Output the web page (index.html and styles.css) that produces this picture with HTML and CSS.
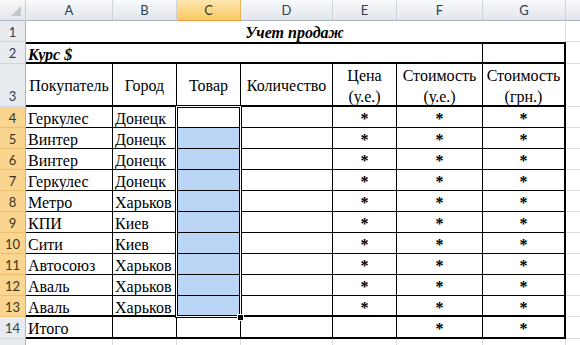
FILE: index.html
```html
<!DOCTYPE html>
<html>
<head>
<meta charset="utf-8">
<link rel="stylesheet" href="styles.css">
</head>
<body>
<div class="sheet">
  <div class="corner"><svg width="26" height="21" viewBox="0 0 26 21"><polygon points="21,6 21,16 11,16" fill="#c3c8cf"/></svg></div>
  <div class="ch">A</div><div class="ch">B</div><div class="ch csel">C</div><div class="ch">D</div><div class="ch">E</div><div class="ch">F</div><div class="ch">G</div><div class="ch last"></div>

  <div class="rh">1</div>
  <div class="c title">Учет продаж</div>
  <div class="h"></div>

  <div class="rh">2</div>
  <div class="c r2 kurs">Курс $</div>
  <div class="c r2 gl"></div>
  <div class="h"></div>

  <div class="rh rh3">3</div>
  <div class="c hd">Покупатель</div>
  <div class="c hd">Город</div>
  <div class="c hd">Товар</div>
  <div class="c hd">Количество</div>
  <div class="c hd">Цена<br>(у.е.)</div>
  <div class="c hd">Стоимость<br>(у.е.)</div>
  <div class="c hd gl">Стоимость<br>(грн.)</div>
  <div class="h"></div>

  <div class="rh rsel">4</div>
  <div class="c">Геркулес</div><div class="c">Донецк</div><div class="c"></div><div class="c"></div><div class="c s">*</div><div class="c s">*</div><div class="c s gl">*</div><div class="h"></div>

  <div class="rh rsel">5</div>
  <div class="c">Винтер</div><div class="c">Донецк</div><div class="c bl"></div><div class="c"></div><div class="c s">*</div><div class="c s">*</div><div class="c s gl">*</div><div class="h"></div>

  <div class="rh rsel">6</div>
  <div class="c">Винтер</div><div class="c">Донецк</div><div class="c bl"></div><div class="c"></div><div class="c s">*</div><div class="c s">*</div><div class="c s gl">*</div><div class="h"></div>

  <div class="rh rsel">7</div>
  <div class="c">Геркулес</div><div class="c">Донецк</div><div class="c bl"></div><div class="c"></div><div class="c s">*</div><div class="c s">*</div><div class="c s gl">*</div><div class="h"></div>

  <div class="rh rsel">8</div>
  <div class="c">Метро</div><div class="c">Харьков</div><div class="c bl"></div><div class="c"></div><div class="c s">*</div><div class="c s">*</div><div class="c s gl">*</div><div class="h"></div>

  <div class="rh rsel">9</div>
  <div class="c">КПИ</div><div class="c">Киев</div><div class="c bl"></div><div class="c"></div><div class="c s">*</div><div class="c s">*</div><div class="c s gl">*</div><div class="h"></div>

  <div class="rh rsel">10</div>
  <div class="c">Сити</div><div class="c">Киев</div><div class="c bl"></div><div class="c"></div><div class="c s">*</div><div class="c s">*</div><div class="c s gl">*</div><div class="h"></div>

  <div class="rh rsel">11</div>
  <div class="c">Автосоюз</div><div class="c">Харьков</div><div class="c bl"></div><div class="c"></div><div class="c s">*</div><div class="c s">*</div><div class="c s gl">*</div><div class="h"></div>

  <div class="rh rsel">12</div>
  <div class="c">Аваль</div><div class="c">Харьков</div><div class="c bl"></div><div class="c"></div><div class="c s">*</div><div class="c s">*</div><div class="c s gl">*</div><div class="h"></div>

  <div class="rh rsel">13</div>
  <div class="c tb">Аваль</div><div class="c tb">Харьков</div><div class="c tb bl"></div><div class="c tb"></div><div class="c tb s">*</div><div class="c tb s">*</div><div class="c tb s gl">*</div><div class="h"></div>

  <div class="rh">14</div>
  <div class="c tb">Итого</div><div class="c tb"></div><div class="c tb"></div><div class="c tb"></div><div class="c tb"></div><div class="c tb s">*</div><div class="c tb s gl">*</div><div class="h"></div>

  <div class="rh"></div>
  <div class="e"></div><div class="e"></div><div class="e"></div><div class="e"></div><div class="e"></div><div class="e"></div><div class="e"></div><div class="h"></div>

  <div class="selbox"></div>
  <div class="handle"></div>
</div>
</body>
</html>
```

FILE: styles.css
```css
* { box-sizing: border-box; }
html, body { margin: 0; padding: 0; background: #fff; }

.sheet {
  position: relative;
  display: grid;
  grid-template-columns: 26px 87px 64px 64px 92px 64px 86px 83px 1fr;
  grid-template-rows: 21px 21px 22px 43px repeat(10, 21px) 22px 21px;
  width: 580px;
  height: 345px;
  overflow: hidden;
  font-family: "Liberation Serif", "Times New Roman", serif;
  font-size: 16px;
  color: #000;
}

.corner {
  background: linear-gradient(#f7f8fa, #e3e7ec);
  border-right: 1px solid #c9ced5;
  border-bottom: 1px solid #a9b4c1;
}
.corner svg { display: block; }

.ch {
  background: linear-gradient(#f8f9fb, #e2e6eb);
  border-right: 1px solid #cfd4db;
  border-bottom: 1px solid #a9b4c1;
  font-family: Lato, "Open Sans", sans-serif;
  font-size: 13px;
  color: #2f3d4e;
  display: flex;
  align-items: center;
  justify-content: center;
}
.ch.csel {
  background: linear-gradient(#fde6b0, #f8ca65);
  border-right-color: #e9b45a;
  border-bottom-color: #ef9b3a;
  color: #3a3320;
}
.ch.last { border-right: none; }

.rh {
  background: #e8ecf1;
  border-right: 1px solid #a9b4c1;
  border-bottom: 1px solid #cfd5dc;
  font-family: Lato, "Open Sans", sans-serif;
  font-size: 13px;
  color: #2f3d4e;
  display: flex;
  align-items: center;
  justify-content: center;
  padding-top: 1px;
}
.rh.rh3 { align-items: flex-end; padding-bottom: 2px; }
.rh.rsel {
  background: #f9d58f;
  border-right-color: #e7a84a;
  border-bottom-color: #edc070;
  color: #3a3320;
}

.c {
  border-right: 1px solid #000;
  border-bottom: 1px solid #000;
  padding: 1px 2px 0;
  line-height: 21px;
  white-space: nowrap;
}
.c.gl { border-right: 2px solid #000; }
.c.tb { border-bottom: 2px solid #000; }
.c.s { text-align: center; font-weight: bold; }
.c.bl { background: #bad5f6; }

.title {
  grid-column: span 7;
  border-right: 1px solid #dadcdd;
  border-bottom: none;
  text-align: center;
  font-weight: bold;
  font-style: italic;
  padding-left: 0;
}
.c.r2 {
  border-top: 2px solid #000;
  border-bottom: 2px solid #000;
  padding-top: 0;
}
.kurs {
  grid-column: span 6;
  font-weight: bold;
  font-style: italic;
}

.c.hd {
  display: flex;
  align-items: center;
  justify-content: center;
  text-align: center;
  border-bottom: 2px solid #000;
  padding: 2px 1px 0;
  line-height: 21px;
}

.h { border-bottom: 1px solid #dadcdd; }
.e { border-right: 1px solid #dadcdd; border-bottom: 1px solid #dadcdd; }

.selbox {
  position: absolute;
  left: 176px;
  top: 106px;
  width: 65px;
  height: 211px;
  box-shadow: 0 0 0 1px #000, inset 0 0 0 1px #fff, inset 0 0 0 2px #000;
  pointer-events: none;
}
.handle {
  position: absolute;
  left: 237px;
  top: 314px;
  width: 7px;
  height: 7px;
  background: #000;
  border: 1px solid #fff;
}
```
